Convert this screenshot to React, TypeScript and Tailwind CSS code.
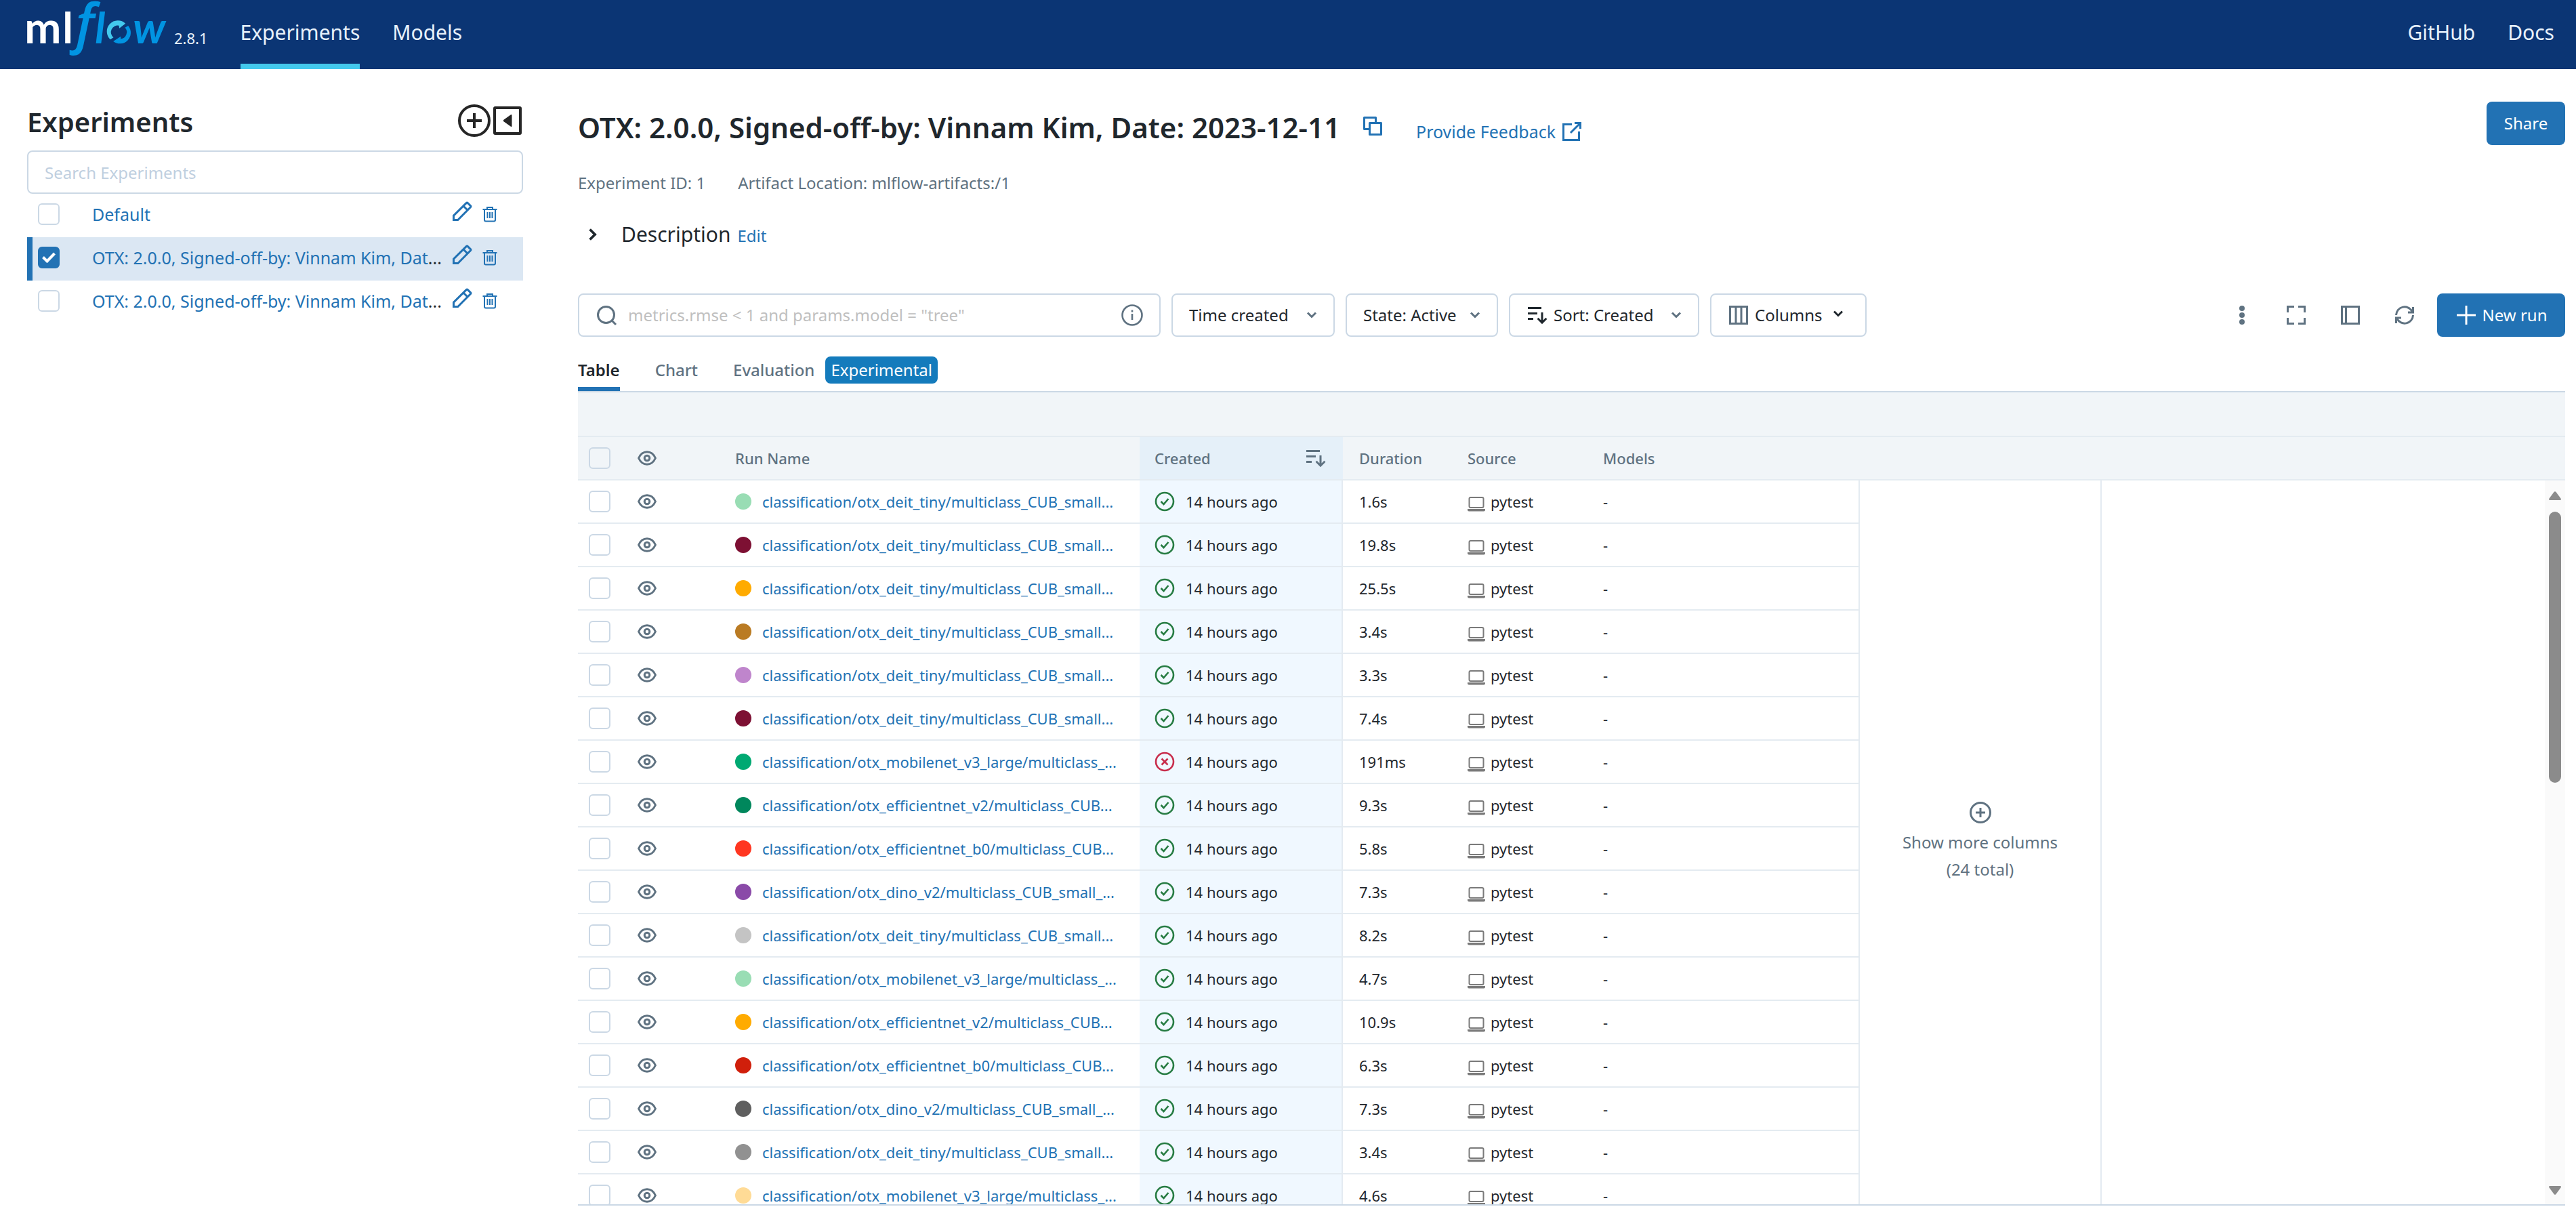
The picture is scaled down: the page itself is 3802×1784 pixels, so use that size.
import type { ReactNode } from "react";

type IconProps = { className?: string };

function Icon({ className = "size-8", children }: IconProps & { children: ReactNode }) {
  return (
    <svg viewBox="0 0 16 16" className={`shrink-0 ${className}`} fill="none" stroke="currentColor" strokeWidth="1.5" aria-hidden="true">
      {children}
    </svg>
  );
}

const PlusCircle = ({ className }: IconProps) => (
  <Icon className={className}>
    <circle cx="8" cy="8" r="7.25" />
    <path d="M8 4.5v7M4.5 8h7" />
  </Icon>
);
const CopyIcon = () => (
  <Icon>
    <path
      stroke="none"
      fill="currentColor"
      fillRule="evenodd"
      d="M1.75 1a.75.75 0 0 0-.75.75v8.5c0 .414.336.75.75.75H5v3.25c0 .414.336.75.75.75h8.5a.75.75 0 0 0 .75-.75v-8.5a.75.75 0 0 0-.75-.75H11V1.75a.75.75 0 0 0-.75-.75h-8.5ZM9.5 5V2.5h-7v7H5V5.75A.75.75 0 0 1 5.75 5H9.5Zm-3 8.5v-7h7v7h-7Z"
    />
  </Icon>
);
const NewWindow = () => (
  <Icon>
    <path d="M8 2.75H1.75v11.5h11.5V8M10 1.75h4.25V6M14.25 1.75 7 9" />
  </Icon>
);
const Pencil = () => (
  <Icon>
    <path d="M1.75 14.25V11.1L11.1 1.8a.8.8 0 0 1 1.1 0l2 2a.8.8 0 0 1 0 1.1L4.9 14.25ZM9 4l3 3" />
  </Icon>
);
const Trash = () => (
  <svg viewBox="0 0 22 24" className="h-6 w-[22px] shrink-0" fill="none" stroke="currentColor" strokeWidth="2" aria-hidden="true">
    <path d="M0.5 5h21M7 5V2h8v3M3 5v15.5a2 2 0 0 0 2 2h12a2 2 0 0 0 2-2V5M7.5 9v9M11 9v9M14.5 9v9" />
  </svg>
);
const Chevron = ({ className = "size-4" }: IconProps) => (
  <svg viewBox="0 0 16 16" className={`shrink-0 ${className}`} fill="none" stroke="currentColor" strokeWidth="3" aria-hidden="true">
    <path d="M2 4.5 8 10.5 14 4.5" />
  </svg>
);
const SortIcon = ({ className }: IconProps) => (
  <Icon className={className}>
    <path d="M1 2.75h10M1 6.75h7M1 10.75h4M11.5 6v7.5M8.3 10.4l3.2 3.2 3.2-3.2" />
  </Icon>
);
const ColumnsIcon = () => (
  <Icon>
    <path d="M1.75 1.75h12.5v12.5H1.75zM6 2v12M10 2v12" />
  </Icon>
);
const SearchIcon = () => (
  <Icon>
    <circle cx="7.75" cy="7.75" r="6" />
    <path d="m12 12 3 3" />
  </Icon>
);
const InfoIcon = () => (
  <Icon>
    <circle cx="8" cy="8" r="7.25" strokeWidth="1.3" />
    <path d="M8 7v4.5M8 4.3v1.5" strokeWidth="1.3" />
  </Icon>
);
const Kebab = () => (
  <Icon>
    <g fill="currentColor" stroke="none">
      <circle cx="8" cy="3" r="2" />
      <circle cx="8" cy="8" r="2" />
      <circle cx="8" cy="13" r="2" />
    </g>
  </Icon>
);
const Fullscreen = () => (
  <Icon>
    <path d="M6.5 1.75H1.75V6M9.5 1.75h4.75V6M6.5 14.25H1.75V10M9.5 14.25h4.75V10" />
  </Icon>
);
const PanelIcon = () => (
  <Icon>
    <path d="M1.75 1.75h12.5v12.5H1.75zM4.75 2v12" />
  </Icon>
);
const Refresh = () => (
  <Icon>
    <path d="M1.75 8A6.25 6.25 0 0 1 13.6 5.4M14.25 2v4H10.5M14.25 8A6.25 6.25 0 0 1 2.4 10.6M1.75 14v-4H5.5" />
  </Icon>
);
const Eye = () => (
  <Icon>
    <path d="M1.8 8c1.3-2.9 3.600-4.600 6.200-4.600S12.900 5.100 14.200 8c-1.300 2.900-3.600 4.600-6.200 4.600S3.100 10.900 1.800 8Z" />
    <circle cx="8" cy="8" r="1.9" />
  </Icon>
);
const Laptop = () => (
  <svg viewBox="0 0 26 22" className="h-[22px] w-[26px] shrink-0 text-[#7a7a7a]" aria-hidden="true">
    <rect x="2.5" y="1" width="21" height="15" rx="2" fill="none" stroke="currentColor" strokeWidth="2" />
    <path d="M0 18h26v1.5a2 2 0 0 1-2 2H2a2 2 0 0 1-2-2Z" fill="currentColor" />
  </svg>
);
const Status = ({ ok }: { ok: boolean }) => (
  <svg viewBox="0 0 30 30" className={ok ? "size-[30px] shrink-0 text-[#277c43]" : "size-[30px] shrink-0 text-[#c82d4c]"} fill="none" stroke="currentColor" strokeWidth="2.6" role="img" aria-label={ok ? "Finished" : "Failed"}>
    <circle cx="15" cy="15" r="13" />
    <path d={ok ? "m9.5 15 4 4 7-8" : "m10.5 10.5 9 9m0-9-9 9"} />
  </svg>
);

function Logo() {
  return (
    <svg viewBox="30 0 680 306" className="h-[102px] w-[227px] shrink-0 overflow-visible" role="img" aria-label="mlflow">
      <text x="48" y="192" fontFamily="Lato" fontWeight="700" fontSize="194" fill="#fff">m</text>
      <text x="216" y="192" fontFamily="Lato" fontWeight="700" fontSize="190" fill="#fff">l</text>
      <text x="274" y="189" fontFamily="Open Sans" fontStyle="italic" fontWeight="600" fontSize="240" fill="#0194e2">f</text>
      <text x="360" y="192" fontFamily="Lato" fontStyle="italic" fontWeight="700" fontSize="190" fill="#0194e2">l</text>
      <path d="M428 175A48 48 0 0 1 495 104L468 125L466 113A30 30 0 0 0 442 166Z" fill="#43c9ed" />
      <path d="M493 122L507 114A48 48 0 0 1 441 183L474 161L474 172A30 30 0 0 0 493 122Z" fill="#0194e2" />
      <text x="528" y="192" fontFamily="Lato" fontStyle="italic" fontWeight="700" fontSize="196" fill="#0194e2">w</text>
    </svg>
  );
}

function Checkbox({ label, checked = false }: { label: string; checked?: boolean }) {
  return (
    <span className="inline-grid size-8 shrink-0 place-items-center">
      <input
        type="checkbox"
        aria-label={label}
        defaultChecked={checked}
        className="col-start-1 row-start-1 size-8 appearance-none rounded-md border-2 border-[#cbd8e5] checked:border-[#2272b4] checked:bg-[#2272b4]"
      />
      {checked && (
        <svg viewBox="0 0 20 16" className="pointer-events-none col-start-1 row-start-1 h-4 w-5" fill="none" stroke="#fff" strokeWidth="4" aria-hidden="true">
          <path d="m1.5 7.5 6 6L18.500 2" />
        </svg>
      )}
    </span>
  );
}

const experiments = [
  { name: "Default", more: "", selected: false },
  { name: "OTX: 2.0.0, Signed-off-by: Vinnam Kim, Dat", more: "...", selected: true },
  { name: "OTX: 2.0.0, Signed-off-by: Vinnam Kim, Dat", more: "...", selected: false },
];

function Sidebar() {
  return (
    <aside className="w-[732px] shrink-0 pt-[52px]">
      <div className="flex h-12 items-center justify-between">
        <h2 className="pt-1 text-[40px] leading-[48px] font-semibold">Experiments</h2>
        <div className="flex items-center gap-1 text-[#262626]">
          <button aria-label="New experiment" className="size-12">
            <svg viewBox="0 0 48 48" className="size-12" fill="none" stroke="currentColor" strokeWidth="4" aria-hidden="true">
              <circle cx="24" cy="24" r="22" />
              <path d="M24 13v22M13 24h22" />
            </svg>
          </button>
          <button aria-label="Hide experiment list" className="mr-[2px] size-[42px]">
            <svg viewBox="0 0 42 42" className="size-[42px]" aria-hidden="true">
              <rect x="2" y="2" width="38" height="38" rx="1" fill="none" stroke="currentColor" strokeWidth="4" />
              <path d="M16 20.500 26.500 13v16L16 21.500Z" fill="currentColor" stroke="currentColor" strokeWidth="2" strokeLinejoin="round" />
            </svg>
          </button>
        </div>
      </div>
      <input
        type="text"
        aria-label="Search Experiments"
        placeholder="Search Experiments"
        className="mt-5 block h-16 w-full rounded-lg border-2 border-[#cbd8e5] px-6 text-[24px] outline-none placeholder:text-[#bfcfdf]"
      />
      <ul>
        {experiments.map((e, i) => (
          <li key={i} className={e.selected ? "flex h-16 items-center border-l-8 border-[#2272b4] bg-[#dbe7f3] pr-[38px] pb-1" : "flex h-16 items-center border-l-8 border-transparent pr-[38px] pb-1"}>
            <span className="pl-2">
              <span className="flex"><Checkbox label={e.name} checked={e.selected} /></span>
            </span>
            <span className="ml-12 min-w-0 flex-1 text-[25px] leading-8 whitespace-nowrap">
              <a href="#" className="text-[#2272b4]">{e.name}</a>{e.more}
            </span>
            <span className="flex items-center gap-[14px] text-[#2272b4]">
              <button aria-label="Rename experiment" className="-mt-2"><Pencil /></button>
              <button aria-label="Delete experiment"><Trash /></button>
            </span>
          </li>
        ))}
      </ul>
    </aside>
  );
}

function SelectBox({ label, className, chevron, icon }: { label: string; className: string; chevron: string; icon?: ReactNode }) {
  return (
    <div className="relative">
      {icon}
      <select aria-label={label} className={`block h-16 appearance-none rounded-lg border-2 border-[#cbd8e5] bg-transparent text-[24px] ${className}`}>
        <option>{label}</option>
      </select>
      <span className={`pointer-events-none absolute top-6 text-[#5f7281] ${chevron}`}><Chevron /></span>
    </div>
  );
}

function Toolbar() {
  return (
    <div className="mt-[67px] flex items-center gap-4">
      <div className="flex h-16 w-[860px] items-center rounded-lg border-2 border-[#cbd8e5] px-6 text-[#5f7281]">
        <SearchIcon />
        <input
          type="text"
          aria-label="Search runs"
          placeholder={'metrics.rmse < 1 and params.model = "tree"'}
          className="ml-4 min-w-0 flex-1 text-[24px] outline-none placeholder:text-[#bfbfbf]"
        />
        <button aria-label="Search help"><InfoIcon /></button>
      </div>
      <SelectBox label="Time created" className="w-[241px] pl-6" chevron="right-[26px]" />
      <SelectBox label="State: Active" className="w-[225px] pl-6" chevron="right-[26px]" />
      <SelectBox
        label="Sort: Created"
        className="w-[281px] pl-16"
        chevron="right-[26px]"
        icon={<span className="pointer-events-none absolute top-4 left-[26px]"><SortIcon /></span>}
      />
      <button className="flex h-16 w-[231px] items-center rounded-lg border-2 border-[#cbd8e5] pl-6 text-[24px]">
        <span className="text-[#5f7281]"><ColumnsIcon /></span>
        <span className="ml-2 flex-1 text-left">Columns</span>
        <Chevron className="mr-8 mb-1 size-4" />
      </button>
      <div className="ml-auto flex items-center text-[#5f7281]">
        <button aria-label="More actions" className="grid h-16 w-20 place-items-center"><Kebab /></button>
        <button aria-label="Full screen" className="grid h-16 w-20 place-items-center"><Fullscreen /></button>
        <button aria-label="Toggle side panel" className="grid h-16 w-20 place-items-center"><PanelIcon /></button>
        <button aria-label="Refresh" className="grid h-16 w-20 place-items-center"><Refresh /></button>
        <button className="ml-2 flex h-16 w-[189px] items-center justify-center gap-2 rounded-lg bg-[#2272b4] text-[24px] text-white">
          <Icon><path d="M8 1v14M1 8h14" /></Icon>
          New run
        </button>
      </div>
    </div>
  );
}

const DEIT = "classification/otx_deit_tiny/multiclass_CUB_small...";
const MOBILE = "classification/otx_mobilenet_v3_large/multiclass_...";
const EFFV2 = "classification/otx_efficientnet_v2/multiclass_CUB...";
const EFFB0 = "classification/otx_efficientnet_b0/multiclass_CUB...";
const DINO = "classification/otx_dino_v2/multiclass_CUB_small_...";

const runs: { name: string; color: string; duration: string; failed?: boolean }[] = [
  { name: DEIT, color: "bg-[#99ddb4]", duration: "1.6s" },
  { name: DEIT, color: "bg-[#7d1033]", duration: "19.8s" },
  { name: DEIT, color: "bg-[#ffab00]", duration: "25.5s" },
  { name: DEIT, color: "bg-[#ba7b23]", duration: "3.4s" },
  { name: DEIT, color: "bg-[#bf85cc]", duration: "3.3s" },
  { name: DEIT, color: "bg-[#7d1033]", duration: "7.4s" },
  { name: MOBILE, color: "bg-[#00a972]", duration: "191ms", failed: true },
  { name: EFFV2, color: "bg-[#00875c]", duration: "9.3s" },
  { name: EFFB0, color: "bg-[#ff3621]", duration: "5.8s" },
  { name: DINO, color: "bg-[#8a4aa8]", duration: "7.3s" },
  { name: DEIT, color: "bg-[#c4c4c4]", duration: "8.2s" },
  { name: MOBILE, color: "bg-[#99ddb4]", duration: "4.7s" },
  { name: EFFV2, color: "bg-[#ffab00]", duration: "10.9s" },
  { name: EFFB0, color: "bg-[#d01f0b]", duration: "6.3s" },
  { name: DINO, color: "bg-[#5f5f5f]", duration: "7.3s" },
  { name: DEIT, color: "bg-[#919191]", duration: "3.4s" },
  { name: MOBILE, color: "bg-[#ffdb96]", duration: "4.6s" },
];

function RunsTable() {
  return (
    <table className="w-[1890px] shrink-0 table-fixed border-separate border-spacing-0 self-start text-left text-[22px]">
      <colgroup>
        <col className="w-16" />
        <col className="w-36" />
        <col className="w-[621px]" />
        <col className="w-[300px]" />
        <col className="w-40" />
        <col className="w-[200px]" />
        <col />
      </colgroup>
      <thead className="bg-[#f1f5f8] text-[#5f7281]">
        <tr className="h-16 *:border-b-2 *:border-[#e4ebf1] *:p-0 *:font-medium">
          <th><span className="flex pl-4"><Checkbox label="Select all runs" /></span></th>
          <th><button aria-label="Toggle visibility of all runs" className="flex pl-[22px]"><Eye /></button></th>
          <th><span className="pl-6">Run Name</span></th>
          <th className="bg-[#e5f0f9]">
            <span className="flex items-center justify-between pr-6 pl-[22px]">Created<SortIcon /></span>
          </th>
          <th><span className="pl-6">Duration</span></th>
          <th><span className="pl-6">Source</span></th>
          <th><span className="pl-6">Models</span></th>
        </tr>
      </thead>
      <tbody>
        {runs.map((r, i) => (
          <tr key={i} className="h-16 *:border-b-2 *:border-[#e4ebf1] *:p-0">
            <td><span className="flex pl-4"><Checkbox label={`Select run ${i + 1}`} /></span></td>
            <td><button aria-label="Toggle run visibility" className="flex pl-[22px] text-[#5f7281]"><Eye /></button></td>
            <td>
              <span className="flex items-center gap-4 pl-6">
                <span className={`size-6 shrink-0 rounded-full ${r.color}`} />
                <a href="#" className="whitespace-nowrap text-[#2272b4]">{r.name}</a>
              </span>
            </td>
            <td className="border-r-2 bg-[#f0f8ff]">
              <span className="flex items-center gap-4 pl-[22px]"><Status ok={!r.failed} />14 hours ago</span>
            </td>
            <td><span className="pl-6">{r.duration}</span></td>
            <td><span className="flex items-center gap-2 pl-6"><span className="pt-2"><Laptop /></span>pytest</span></td>
            <td><span className="pl-6">-</span></td>
          </tr>
        ))}
      </tbody>
    </table>
  );
}

export default function App() {
  return (
    <div className="flex h-screen flex-col overflow-hidden bg-white font-['Noto_Sans',sans-serif] text-[#1f272d]">
      <header className="flex h-[102px] shrink-0 items-stretch bg-[#0b3574] pr-8 pl-[30px] text-[30px] text-[#e7f1fb]">
        <Logo />
        <span className="self-center pt-[10px] text-[22px]">2.8.1</span>
        <nav className="ml-12 flex flex-1 gap-12">
          <a href="#" className="flex items-center border-b-8 border-[#43c9ed]">Experiments</a>
          <a href="#" className="flex items-center border-b-8 border-transparent">Models</a>
          <a href="#" className="ml-auto flex items-center border-b-8 border-transparent">GitHub</a>
          <a href="#" className="flex items-center border-b-8 border-transparent">Docs</a>
        </nav>
      </header>
      <div className="flex min-h-0 flex-1 pr-4 pl-10">
        <Sidebar />
        <main className="ml-[81px] flex min-w-0 flex-1 flex-col pt-12 pb-[5px]">
          <div className="flex h-16 items-center justify-between">
            <div className="flex items-center pt-3">
              <h1 className="text-[42px] leading-[52px] font-semibold whitespace-nowrap">OTX: 2.0.0, Signed-off-by: Vinnam Kim, Date: 2023-12-11</h1>
              <button aria-label="Copy experiment name" className="mb-1 ml-8 text-[#2272b4]"><CopyIcon /></button>
              <a href="#" className="mt-3 ml-12 flex items-center gap-2 text-[25px] leading-8 text-[#2272b4]">
                Provide Feedback <NewWindow />
              </a>
            </div>
            <button className="h-16 w-[116px] rounded-lg bg-[#2272b4] text-[24px] text-white">Share</button>
          </div>
          <div className="mt-[38px] flex gap-12 text-[24px] leading-9 text-[#5f7281]">
            <span>Experiment ID: 1</span>
            <span>Artifact Location: mlflow-artifacts:/1</span>
          </div>
          <div className="mt-[38px] flex h-10 items-center">
            <button aria-label="Expand description" className="pl-3"><Chevron className="size-5 -rotate-90" /></button>
            <span className="ml-8 text-[30px] leading-10">Description</span>
            <a href="#" className="mt-1 ml-[10px] text-[24px] text-[#2272b4]">Edit</a>
          </div>
          <Toolbar />
          <div role="tablist" className="flex h-[82px] shrink-0 items-stretch gap-[52px] border-b-2 border-[#cbd8e5] text-[24px] font-medium text-[#5f7281]">
            <button role="tab" aria-selected="true" className="border-b-[6px] border-[#2272b4] pt-6 font-semibold text-[#1f272d]">Table</button>
            <button role="tab" aria-selected="false" className="border-b-[6px] border-transparent pt-6">Chart</button>
            <button role="tab" aria-selected="false" className="flex items-center gap-4 border-b-[6px] border-transparent pt-6">
              Evaluation
              <span className="rounded-lg bg-[#147bbc] px-2 py-1 leading-8 font-normal text-white">Experimental</span>
            </button>
          </div>
          <div className="h-[66px] shrink-0 border-b-2 border-[#e4ebf1] bg-[#f1f5f8]" />
          <div className="flex min-h-0 flex-1 overflow-hidden border-b-2 border-[#cbd8e5]">
            <RunsTable />
            <div className="flex w-[359px] shrink-0 flex-col">
              <div className="h-16 shrink-0 border-b-2 border-[#e4ebf1] bg-[#f1f5f8]" />
              <button className="flex flex-1 flex-col items-center justify-center border-x-2 border-[#e4ebf1] text-[24px] leading-10 text-[#5f7281]">
                <PlusCircle className="mb-2 size-8" />
                <span>Show more columns</span>
                <span>(24 total)</span>
              </button>
            </div>
            <div className="flex flex-1 flex-col">
              <div className="h-16 shrink-0 border-b-2 border-[#e4ebf1] bg-[#f1f5f8]" />
              <div className="flex w-[30px] flex-1 flex-col items-center self-end bg-[#fafafa] pt-4 pb-[14px] text-[#8b8b8b]">
                <svg viewBox="0 0 18 14" className="h-[14px] w-[18px]" fill="currentColor" aria-hidden="true"><path d="M7.500 1a2 2 0 0 1 3 0l7 9.500q1.200 2.500-1 2.500h-15q-2.200 0-1-2.500Z" /></svg>
                <div className="mt-4 h-[400px] w-[18px] rounded-full bg-[#8b8b8b]" />
                <svg viewBox="0 0 18 14" className="mt-auto h-[14px] w-[18px] rotate-180" fill="currentColor" aria-hidden="true"><path d="M7.500 1a2 2 0 0 1 3 0l7 9.500q1.200 2.500-1 2.500h-15q-2.200 0-1-2.500Z" /></svg>
              </div>
            </div>
          </div>
        </main>
      </div>
    </div>
  );
}
